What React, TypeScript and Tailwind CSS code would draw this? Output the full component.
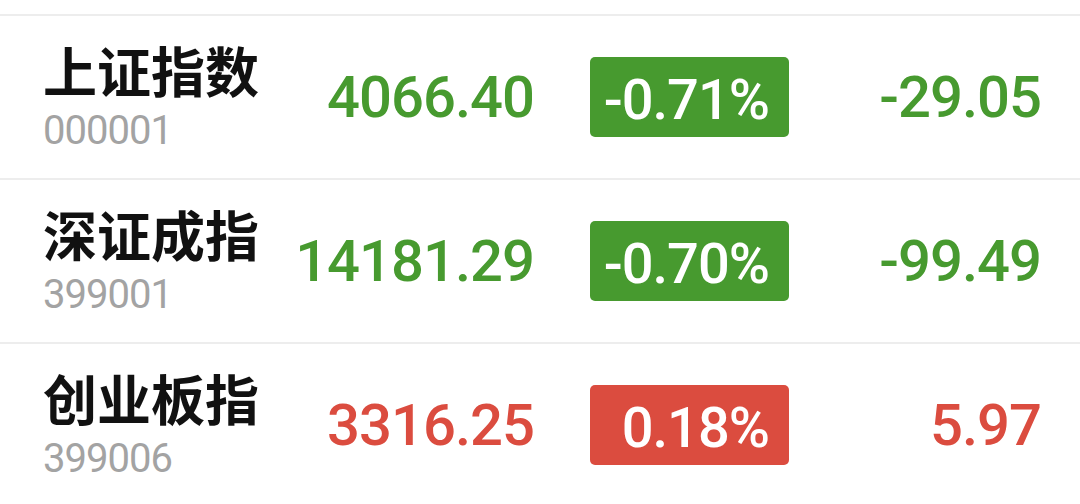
const rows = [
  { name: '上证指数', code: '000001', price: '4066.40', pct: '-0.71%', chg: '-29.05', up: false },
  { name: '深证成指', code: '399001', price: '14181.29', pct: '-0.70%', chg: '-99.49', up: false },
  { name: '创业板指', code: '399006', price: '3316.25', pct: '0.18%', chg: '5.97', up: true },
]

export default function App() {
  return (
    <div className="w-[1080px] h-[504px] overflow-hidden bg-white pt-[14px] font-['Roboto','Noto_Sans',sans-serif]">
      {rows.map((r) => (
        <div key={r.code} className="flex items-center h-[164px] border-t-2 border-[#ededed]">
          <div className="w-[288px] pl-[43px] flex flex-col">
            <span className="text-[54px] leading-none font-bold text-[#111111] font-['Noto_Sans_CJK_SC',sans-serif]">
              {r.name}
            </span>
            <span className="text-[40px] leading-none mt-[14px] text-[#a3a3a3] tracking-[-1px]">
              {r.code}
            </span>
          </div>
          <div
            className={`w-[246px] text-right text-[58px] leading-none font-medium tracking-[-1px] ${r.up ? 'text-[#db4c3f]' : 'text-[#479a2f]'}`}
          >
            {r.price}
          </div>
          <div
            className={`ml-[56px] w-[199px] h-[80px] rounded-[5px] flex items-center justify-end text-white text-[56px] leading-none font-medium tracking-[-1px] pt-[6px] pr-[20px] ${r.up ? 'bg-[#db4c3f]' : 'bg-[#479a2f]'}`}
          >
            {r.pct}
          </div>
          <div
            className={`w-[252px] text-right text-[58px] leading-none font-medium tracking-[-1px] ${r.up ? 'text-[#db4c3f]' : 'text-[#479a2f]'}`}
          >
            {r.chg}
          </div>
        </div>
      ))}
    </div>
  )
}
